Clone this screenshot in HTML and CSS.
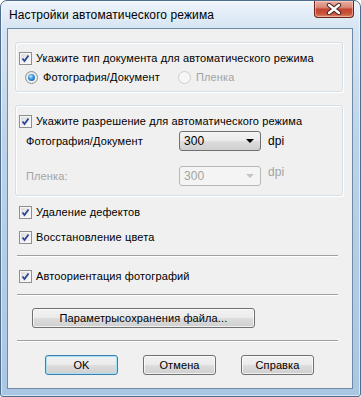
FILE: index.html
```html
<!DOCTYPE html>
<html lang="ru">
<head>
    <meta charset="UTF-8">
    <title>Настройки автоматического режима</title>
    <link rel="stylesheet" href="styles.css">
</head>
<body>
    <div class="window">
        <div class="titlebar">
            <span class="title">Настройки автоматического режима</span>
            <span class="close">
                <svg width="16" height="12" viewBox="0 0 16 12">
                    <path d="M3 2 L13 10 M13 2 L3 10" stroke="#4a2020" stroke-width="4.4" stroke-linecap="round"/>
                    <path d="M3 2 L13 10 M13 2 L3 10" stroke="#ffffff" stroke-width="2.4" stroke-linecap="round"/>
                </svg>
            </span>
        </div>

        <div class="client">
            <div class="group group-type">
                <div class="row">
                    <span class="check"><svg width="11" height="11" viewBox="0 0 11 11"><path d="M2.5 5.5 L4.5 8 L8.5 2.5" fill="none" stroke="#2c4596" stroke-width="1.8"/></svg></span>
                    <span>Укажите тип документа для автоматического режима</span>
                </div>
                <div class="row radios">
                    <span class="radio-item first">
                        <span class="radio on"></span>
                        <span>Фотография/Документ</span>
                    </span>
                    <span class="radio-item disabled">
                        <span class="radio"></span>
                        <span>Пленка</span>
                    </span>
                </div>
            </div>

            <div class="group group-res">
                <div class="row">
                    <span class="check"><svg width="11" height="11" viewBox="0 0 11 11"><path d="M2.5 5.5 L4.5 8 L8.5 2.5" fill="none" stroke="#2c4596" stroke-width="1.8"/></svg></span>
                    <span>Укажите разрешение для автоматического режима</span>
                </div>
                <div class="row field">
                    <span class="field-label">Фотография/Документ</span>
                    <span class="combo">
                        <span>300</span>
                        <span class="arrow"></span>
                    </span>
                    <span class="unit">dpi</span>
                </div>
                <div class="row field disabled">
                    <span class="field-label">Пленка:</span>
                    <span class="combo">
                        <span>300</span>
                        <span class="arrow"></span>
                    </span>
                    <span class="unit raised">dpi</span>
                </div>
            </div>

            <div class="row option first-option">
                <span class="check"><svg width="11" height="11" viewBox="0 0 11 11"><path d="M2.5 5.5 L4.5 8 L8.5 2.5" fill="none" stroke="#2c4596" stroke-width="1.8"/></svg></span>
                <span>Удаление дефектов</span>
            </div>
            <div class="row option second-option">
                <span class="check"><svg width="11" height="11" viewBox="0 0 11 11"><path d="M2.5 5.5 L4.5 8 L8.5 2.5" fill="none" stroke="#2c4596" stroke-width="1.8"/></svg></span>
                <span>Восстановление цвета</span>
            </div>

            <div class="separator sep-1"></div>

            <div class="row option orient-option">
                <span class="check"><svg width="11" height="11" viewBox="0 0 11 11"><path d="M2.5 5.5 L4.5 8 L8.5 2.5" fill="none" stroke="#2c4596" stroke-width="1.8"/></svg></span>
                <span>Автоориентация фотографий</span>
            </div>

            <div class="separator sep-2"></div>

            <button class="btn btn-save">Параметрысохранения файла...</button>

            <div class="separator sep-3"></div>

            <div class="actions">
                <button class="btn btn-default">OK</button>
                <button class="btn">Отмена</button>
                <button class="btn">Справка</button>
            </div>
        </div>
    </div>
</body>
</html>
```

FILE: styles.css
```css
html, body {
    margin: 0;
    padding: 0;
    background: #ffffff;
}
body {
    width: 361px;
    height: 397px;
    overflow: hidden;
    font-family: "Liberation Sans", Arial, sans-serif;
    font-size: 11px;
    letter-spacing: 0.12px;
    color: #000;
}
.window {
    box-sizing: border-box;
    width: 361px;
    height: 397px;
    border: 1px solid #4f6d8c;
    border-radius: 7px 7px 3px 3px;
    background: linear-gradient(180deg, #eef4fa 0%, #d6e5f3 7%, #bcd3ea 35%, #a9c6e3 100%);
    box-shadow: inset 0 0 0 1px rgba(255, 255, 255, 0.55);
    display: flex;
    flex-direction: column;
}
.titlebar {
    height: 27px;
    display: flex;
    align-items: flex-start;
    flex-shrink: 0;
}
.title {
    font-size: 12px;
    letter-spacing: 0.1px;
    line-height: 16px;
    padding: 6px 0 0 8px;
    color: #000;
}
.close {
    margin-left: auto;
    margin-right: 6px;
    width: 40px;
    height: 17px;
    box-sizing: border-box;
    border: 1px solid #6a2419;
    border-top: none;
    border-radius: 0 0 4px 4px;
    background: linear-gradient(180deg, #eab1a5 0%, #d98574 40%, #c2432f 52%, #c9553c 80%, #dd8a6c 100%);
    box-shadow: inset 0 0 0 1px rgba(255, 220, 210, 0.5);
    display: flex;
    align-items: center;
    justify-content: center;
}
.client {
    box-sizing: border-box;
    height: 361px;
    margin: 0 7px 0 6px;
    border: 1px solid #6f8aa6;
    background: #f0f0f0;
    display: flex;
    flex-direction: column;
}
.group {
    margin: 13px 9px 0 7px;
    border: 1px solid #d5dfe5;
    border-radius: 3px;
    box-shadow: inset 1px 1px 0 #fff, 1px 1px 0 #fff;
    display: flex;
    flex-direction: column;
}
.group-type {
    padding: 7px 0 6px 3px;
    gap: 3px;
}
.group-res {
    padding: 7px 0 9px 3px;
}
.row {
    display: flex;
    align-items: center;
    height: 16px;
    line-height: 16px;
    white-space: nowrap;
}
.check {
    box-sizing: border-box;
    width: 13px;
    height: 13px;
    margin-right: 4px;
    border: 1px solid #8e8f8f;
    background: linear-gradient(135deg, #d8d8d8 0%, #f0f0f0 60%, #ffffff 100%);
    box-shadow: inset 0 0 0 1px #f6f6f6;
    display: flex;
    align-items: center;
    justify-content: center;
    flex-shrink: 0;
}
.radios {
    padding-left: 6px;
}
.radio-item {
    display: flex;
    align-items: center;
}
.radio-item.first {
    width: 153px;
}
.radio {
    box-sizing: border-box;
    width: 13px;
    height: 13px;
    margin-right: 5px;
    border: 1px solid #8e8f8f;
    border-radius: 50%;
    background: radial-gradient(circle at 60% 65%, #ffffff 0%, #e6e6e6 70%, #d2d2d2 100%);
    position: relative;
}
.radio.on::after {
    content: "";
    position: absolute;
    left: 2px;
    top: 2px;
    width: 7px;
    height: 7px;
    border-radius: 50%;
    background: radial-gradient(circle at 40% 35%, #c8ecff 0%, #3d9be0 40%, #0f4f95 100%);
}
.radio-item.disabled {
    color: #a3a3a3;
}
.radio-item.disabled .radio {
    border-color: #cfcfcf;
    background: #f6f6f6;
}
.field {
    height: 20px;
    margin-top: 2px;
    padding-left: 7px;
}
.field.disabled {
    margin-top: 15px;
    color: #a3a3a3;
}
.field-label {
    width: 153px;
}
.combo {
    box-sizing: border-box;
    width: 82px;
    height: 20px;
    padding: 0 6px 0 4px;
    font-size: 12px;
    border: 1px solid #707070;
    border-radius: 3px;
    background: linear-gradient(180deg, #f3f3f3 0%, #ebebeb 48%, #dddddd 52%, #cfcfcf 100%);
    display: flex;
    align-items: center;
    justify-content: space-between;
}
.arrow {
    width: 0;
    height: 0;
    border-left: 4px solid transparent;
    border-right: 4px solid transparent;
    border-top: 4px solid #000;
}
.field.disabled .combo {
    border-color: #b5b9bc;
    background: #f4f4f4;
}
.field.disabled .arrow {
    border-top-color: #c4c4c4;
}
.unit {
    margin-left: 7px;
    font-size: 12px;
}
.unit.raised {
    align-self: flex-start;
    line-height: 12px;
}
.option {
    margin-left: 11px;
}
.first-option {
    margin-top: 8px;
}
.second-option {
    margin-top: 9px;
}
.orient-option {
    margin-top: 11px;
}
.separator {
    height: 0;
    margin: 0 14px 0 9px;
    border-top: 1px solid #a0a0a0;
    border-bottom: 1px solid #ffffff;
}
.sep-1 {
    margin-top: 10px;
}
.sep-2 {
    margin-top: 10px;
}
.sep-3 {
    margin-top: 12px;
}
.btn {
    box-sizing: border-box;
    height: 20px;
    padding: 0;
    font-family: "Liberation Sans", Arial, sans-serif;
    font-size: 11px;
    letter-spacing: 0.12px;
    color: #000;
    border: 1px solid #707070;
    border-radius: 3px;
    background: linear-gradient(180deg, #f2f2f2 0%, #ebebeb 48%, #dddddd 52%, #cfcfcf 100%);
    box-shadow: inset 0 0 0 1px rgba(255, 255, 255, 0.7);
}
.btn-save {
    margin: 12px 0 0 24px;
    width: 223px;
}
.actions {
    display: flex;
    gap: 25px;
    margin: 13px 0 0 37px;
}
.actions .btn {
    width: 73px;
}
.btn-default {
    border-color: #3c7fb1;
    box-shadow: inset 0 0 0 1px #a8e0f6;
}
```
